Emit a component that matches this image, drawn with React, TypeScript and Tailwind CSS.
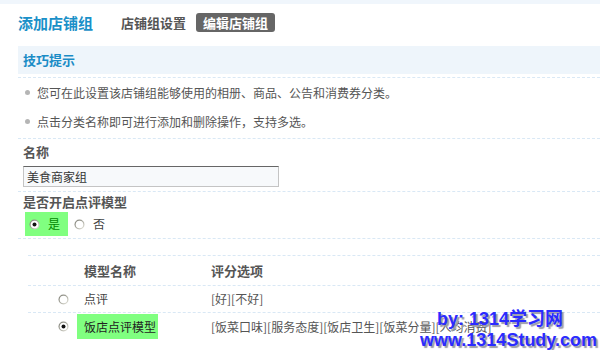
import React from "react";

const FONT = { fontFamily: "'Noto Sans CJK SC', 'Liberation Sans', sans-serif" };

function Radio({ checked }: { checked?: boolean }) {
  return (
    <svg width="11" height="11" viewBox="0 0 11 11" className="shrink-0">
      <defs>
        <linearGradient id={checked ? "rg1" : "rg0"} x1="0" y1="0" x2="1" y2="1">
          <stop offset="0" stopColor="#7a7a72" />
          <stop offset="0.5" stopColor="#a8a89e" />
          <stop offset="1" stopColor="#f0efe6" />
        </linearGradient>
      </defs>
      <circle cx="5.5" cy="5.5" r="5" fill={`url(#${checked ? "rg1" : "rg0"})`} />
      <circle cx="5.5" cy="5.5" r="3.8" fill="#fff" />
      {checked && <circle cx="5.5" cy="5.5" r="2" fill="#111" />}
    </svg>
  );
}

const tips = [
  "您可在此设置该店铺组能够使用的相册、商品、公告和消费券分类。",
  "点击分类名称即可进行添加和删除操作，支持多选。",
];

const models = [
  { name: "点评", opts: "[好][不好]", on: false },
  { name: "饭店点评模型", opts: "[饭菜口味][服务态度][饭店卫生][饭菜分量][人均消费]", on: true },
];

export default function App() {
  return (
    <div className="relative w-[600px] h-[350px] overflow-hidden bg-white text-[12px] text-[#555]" style={FONT}>
      <div className="h-[4px] bg-[#f0f6fc]" />

      {/* Header */}
      <div className="h-[37px] flex items-center pl-[18px]">
        <h1 className="text-[15px] font-bold text-[#1a90c8] leading-none mr-[28px]">添加店铺组</h1>
        <span className="text-[13px] font-bold text-[#555] mr-[10px]">店铺组设置</span>
        <span className="h-[19px] px-[7px] flex items-center rounded-[3px] bg-[#666] text-white text-[13px] font-bold">编辑店铺组</span>
      </div>

      <div className="ml-[18px]">
        {/* Tips */}
        <div className="mt-[5px] h-[28px] bg-[#eef5fb] flex items-center pl-[5px]">
          <span className="text-[13px] font-bold text-[#1a8cc6]">技巧提示</span>
        </div>
        <ul className="mt-[3px] border-t border-b border-dashed border-[#d9e8f5] pb-[2px]">
          {tips.map(t => (
            <li key={t} className="h-[29px] flex items-center pl-[7px]">
              <span className="w-[5px] h-[5px] rounded-full bg-[#b5b5b5] mr-[7px]" />
              <span>{t}</span>
            </li>
          ))}
        </ul>

        {/* Name */}
        <div className="h-[53px] border-b border-dashed border-[#d9e8f5] pl-[5px] pt-[5px]">
          <div className="h-[16px] leading-[16px] font-bold text-[13px]">名称</div>
          <div className="mt-[6px] w-[256px] h-[21px] bg-[#f7f9fb] border border-[#c4c4c4] border-t-[#666] flex items-center pl-[3px] text-[#333]">
            美食商家组
          </div>
        </div>

        {/* Model switch */}
        <div className="h-[47px] border-b border-dashed border-[#d9e8f5] pl-[5px] pt-[2px]">
          <div className="h-[16px] leading-[16px] font-bold text-[13px]">是否开启点评模型</div>
          <div className="mt-[2px] flex items-center h-[24px]">
            <div className="ml-[2px] w-[43px] h-[24px] bg-[#80ff80] flex items-center pl-[4px] gap-[8px]">
              <Radio checked />
              <span className="text-[#080]">是</span>
            </div>
            <div className="ml-[6px] flex items-center gap-[8px]">
              <Radio />
              <span className="text-[#444]">否</span>
            </div>
          </div>
        </div>
      </div>

      {/* Model table */}
      <div className="ml-[28px] mt-[16px] border-t border-dashed border-[#d9e8f5]">
        <div className="h-[30px] flex items-center border-b border-dashed border-[#d9e8f5] font-bold text-[13px]">
          <span className="ml-[56px] w-[127px]">模型名称</span>
          <span>评分选项</span>
        </div>
        {models.map(m => (
          <div key={m.name} className="h-[27px] flex items-center border-b border-dashed border-[#d9e8f5] last:border-b-0">
            <span className="ml-[30px] w-[26px]"><Radio checked={m.on} /></span>
            <span className="w-[134px] flex">
              {m.on ? (
                <span className="h-[25px] flex items-center bg-[#80ff80] pl-[7px] pr-[2px] -ml-[7px] text-[#222]">{m.name}</span>
              ) : (
                <span className="text-[#444]">{m.name}</span>
              )}
            </span>
            <span className="-ml-[7px] whitespace-nowrap">{m.opts}</span>
          </div>
        ))}
      </div>

      {/* Watermark */}
      <div
        className="absolute left-[437px] top-[308px] text-[18px] font-bold text-[#2b2bff] leading-[22px] whitespace-nowrap"
        style={{ fontFamily: "'Liberation Sans', 'Noto Sans CJK SC', sans-serif", textShadow: "2px 2px 1px #9a9aa8" }}
      >
        by: 1314学习网
      </div>
      <div
        className="absolute left-[420px] top-[329px] text-[18px] font-bold text-[#2b2bff] leading-[22px] whitespace-nowrap"
        style={{ fontFamily: "'Liberation Sans', sans-serif", textShadow: "2px 2px 1px #9a9aa8" }}
      >
        www.1314Study.com
      </div>
    </div>
  );
}
